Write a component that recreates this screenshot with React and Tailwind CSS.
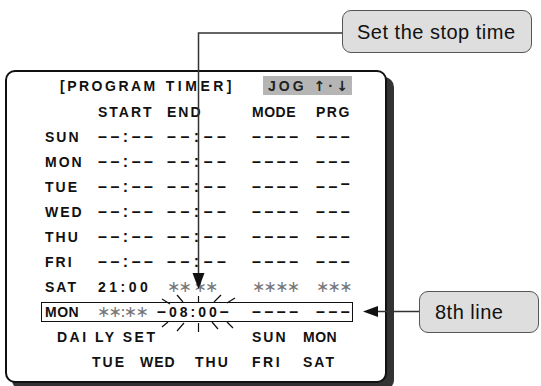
import React from "react";

// Program timer screen diagram with two callouts
const DASH2 = "––:––";

function Dashes({ children, className = "" }) {
  return <span className={`text-[16px] tracking-[3.5px] ${className}`}>{children}</span>;
}

function Stars({ children }) {
  return (
    <span className="font-['DejaVu_Sans'] font-normal text-[16px] text-[#777] tracking-[-1.8px]">
      {children}
    </span>
  );
}

function Row({ day, start, end, mode, prg }) {
  return (
    <div className="flex items-center h-[25px]">
      <div className="w-[57px] pl-[4px] tracking-[2px]">{day}</div>
      <div className="w-[69px]">{start}</div>
      <div className="w-[85px]">{end}</div>
      <div className="w-[64px]">{mode}</div>
      <div className="w-[37px]">{prg}</div>
    </div>
  );
}

export default function App() {
  const blank = {
    start: <Dashes>{DASH2}</Dashes>,
    end: <Dashes className="tracking-[4.5px]">{DASH2}</Dashes>,
    mode: <Dashes>––––</Dashes>,
    prg: <Dashes>–––</Dashes>,
  };

  return (
    <div className="relative w-[541px] h-[386px] bg-white overflow-hidden font-['Liberation_Sans',Arial,sans-serif] text-[#111]">
      {/* Screen panel */}
      <div className="ml-[5px] mt-[70px] w-[382px] h-[313px] border-2 border-[#111] rounded-[10px] bg-white shadow-[7px_7px_0_#333] pl-[34px] font-bold text-[14px] leading-none">
        {/* Title */}
        <div className="flex items-center h-[27px]">
          <div className="w-[222px] pl-[19px] flex">
            <span className="tracking-[2.5px]">[PROGRAM</span>
            <span className="ml-[8px] tracking-[3.5px]">TIMER]</span>
          </div>
          <div className="w-[89px] h-[19px] bg-[#b5b5b5] flex items-center pl-[5px] text-[#222]">
            <span className="tracking-[3px]">JOG</span>
            <span className="ml-[7px] font-['DejaVu_Sans'] font-bold text-[14px]">↑</span>
            <span className="ml-[3px] text-[15px]">·</span>
            <span className="ml-[3px] font-['DejaVu_Sans'] font-bold text-[14px]">↓</span>
          </div>
        </div>

        {/* Column headings */}
        <div className="flex items-center h-[25px]">
          <div className="w-[57px]" />
          <div className="w-[69px] tracking-[2px]">START</div>
          <div className="w-[85px] tracking-[2px]">END</div>
          <div className="w-[64px] tracking-[0.5px]">MODE</div>
          <div className="w-[37px] tracking-[1.5px]">PRG</div>
        </div>

        <Row day="SUN" {...blank} />
        <Row day="MON" {...blank} />
        <Row
          day="TUE"
          {...blank}
          prg={
            <Dashes>
              ––<span className="relative -top-[3px]">–</span>
            </Dashes>
          }
        />
        <Row day="WED" {...blank} />
        <Row day="THU" {...blank} />
        <Row day="FRI" {...blank} />
        <Row
          day="SAT"
          start={<span className="tracking-[3.5px]">21:00</span>}
          end={<Stars>∗∗ ∗∗</Stars>}
          mode={<Stars>∗∗∗∗</Stars>}
          prg={<Stars>∗∗∗</Stars>}
        />

        {/* 8th line, boxed */}
        <div className="flex items-center h-[25px]">
          <div className="flex items-center w-[312px] h-[20px] border border-[#111]">
            <div className="w-[55px] pl-[3px] tracking-[0.5px]">MON</div>
            <div className="w-[60px]">
              <Stars>∗∗:∗∗</Stars>
            </div>
            <div className="w-[95px] tracking-[3px]">
              <span className="text-[16px]">–</span>08:00<span className="text-[16px]">–</span>
            </div>
            <div className="w-[64px]">
              <Dashes>––––</Dashes>
            </div>
            <div className="w-[36px]">
              <Dashes>–––</Dashes>
            </div>
          </div>
        </div>

        {/* Day choices */}
        <div className="flex items-center h-[25px]">
          <div className="w-[211px] pl-[16px] tracking-[2.5px]">DAI LY SET</div>
          <div className="w-[51px] tracking-[2px]">SUN</div>
          <div className="tracking-[0.5px]">MON</div>
        </div>
        <div className="flex items-center h-[25px]">
          <div className="w-[51px]" />
          <div className="w-[48px] tracking-[2px]">TUE</div>
          <div className="w-[55px] tracking-[1px]">WED</div>
          <div className="w-[57px] tracking-[2px]">THU</div>
          <div className="w-[51px] tracking-[2.5px]">FRI</div>
          <div className="tracking-[2px]">SAT</div>
        </div>
      </div>

      {/* Leader lines, arrows and blink marks */}
      <svg className="absolute inset-0 pointer-events-none" width="541" height="386" viewBox="0 0 541 386">
        <polyline points="342,33 198.5,33 198.5,276" fill="none" stroke="#333" strokeWidth="1.5" />
        <polygon points="192.5,273 204.5,273 198.5,289" fill="#111" />
        <g stroke="#111" strokeWidth="1.2">
          <line x1="198.5" y1="296" x2="198.5" y2="303" />
          <line x1="198.5" y1="323" x2="198.5" y2="332" />
          <line x1="162" y1="299" x2="170" y2="304" />
          <line x1="177" y1="295" x2="183" y2="302" />
          <line x1="162" y1="327" x2="168" y2="322" />
          <line x1="177" y1="331" x2="184" y2="323" />
          <line x1="214" y1="302" x2="221" y2="295" />
          <line x1="227" y1="303" x2="235" y2="298" />
          <line x1="212" y1="322" x2="218" y2="329" />
          <line x1="227" y1="322" x2="233" y2="328" />
        </g>
        <line x1="419" y1="311.5" x2="376" y2="311.5" stroke="#333" strokeWidth="1.5" />
        <polygon points="363,311.5 378,306 378,317" fill="#111" />
      </svg>

      {/* Callouts */}
      <div className="absolute left-[342px] top-[10px] w-[190px] h-[43px] rounded-[9px] border-[1.5px] border-[#555] bg-[#dedede] flex items-center pl-[14px] text-[20px] tracking-[0.5px] text-[#111]">
        Set the stop time
      </div>
      <div className="absolute left-[419px] top-[291px] w-[120px] h-[42px] rounded-[9px] border-[1.5px] border-[#555] bg-[#dedede] flex items-center pl-[15px] text-[20px] tracking-[0.5px] text-[#111]">
        8th line
      </div>
    </div>
  );
}
